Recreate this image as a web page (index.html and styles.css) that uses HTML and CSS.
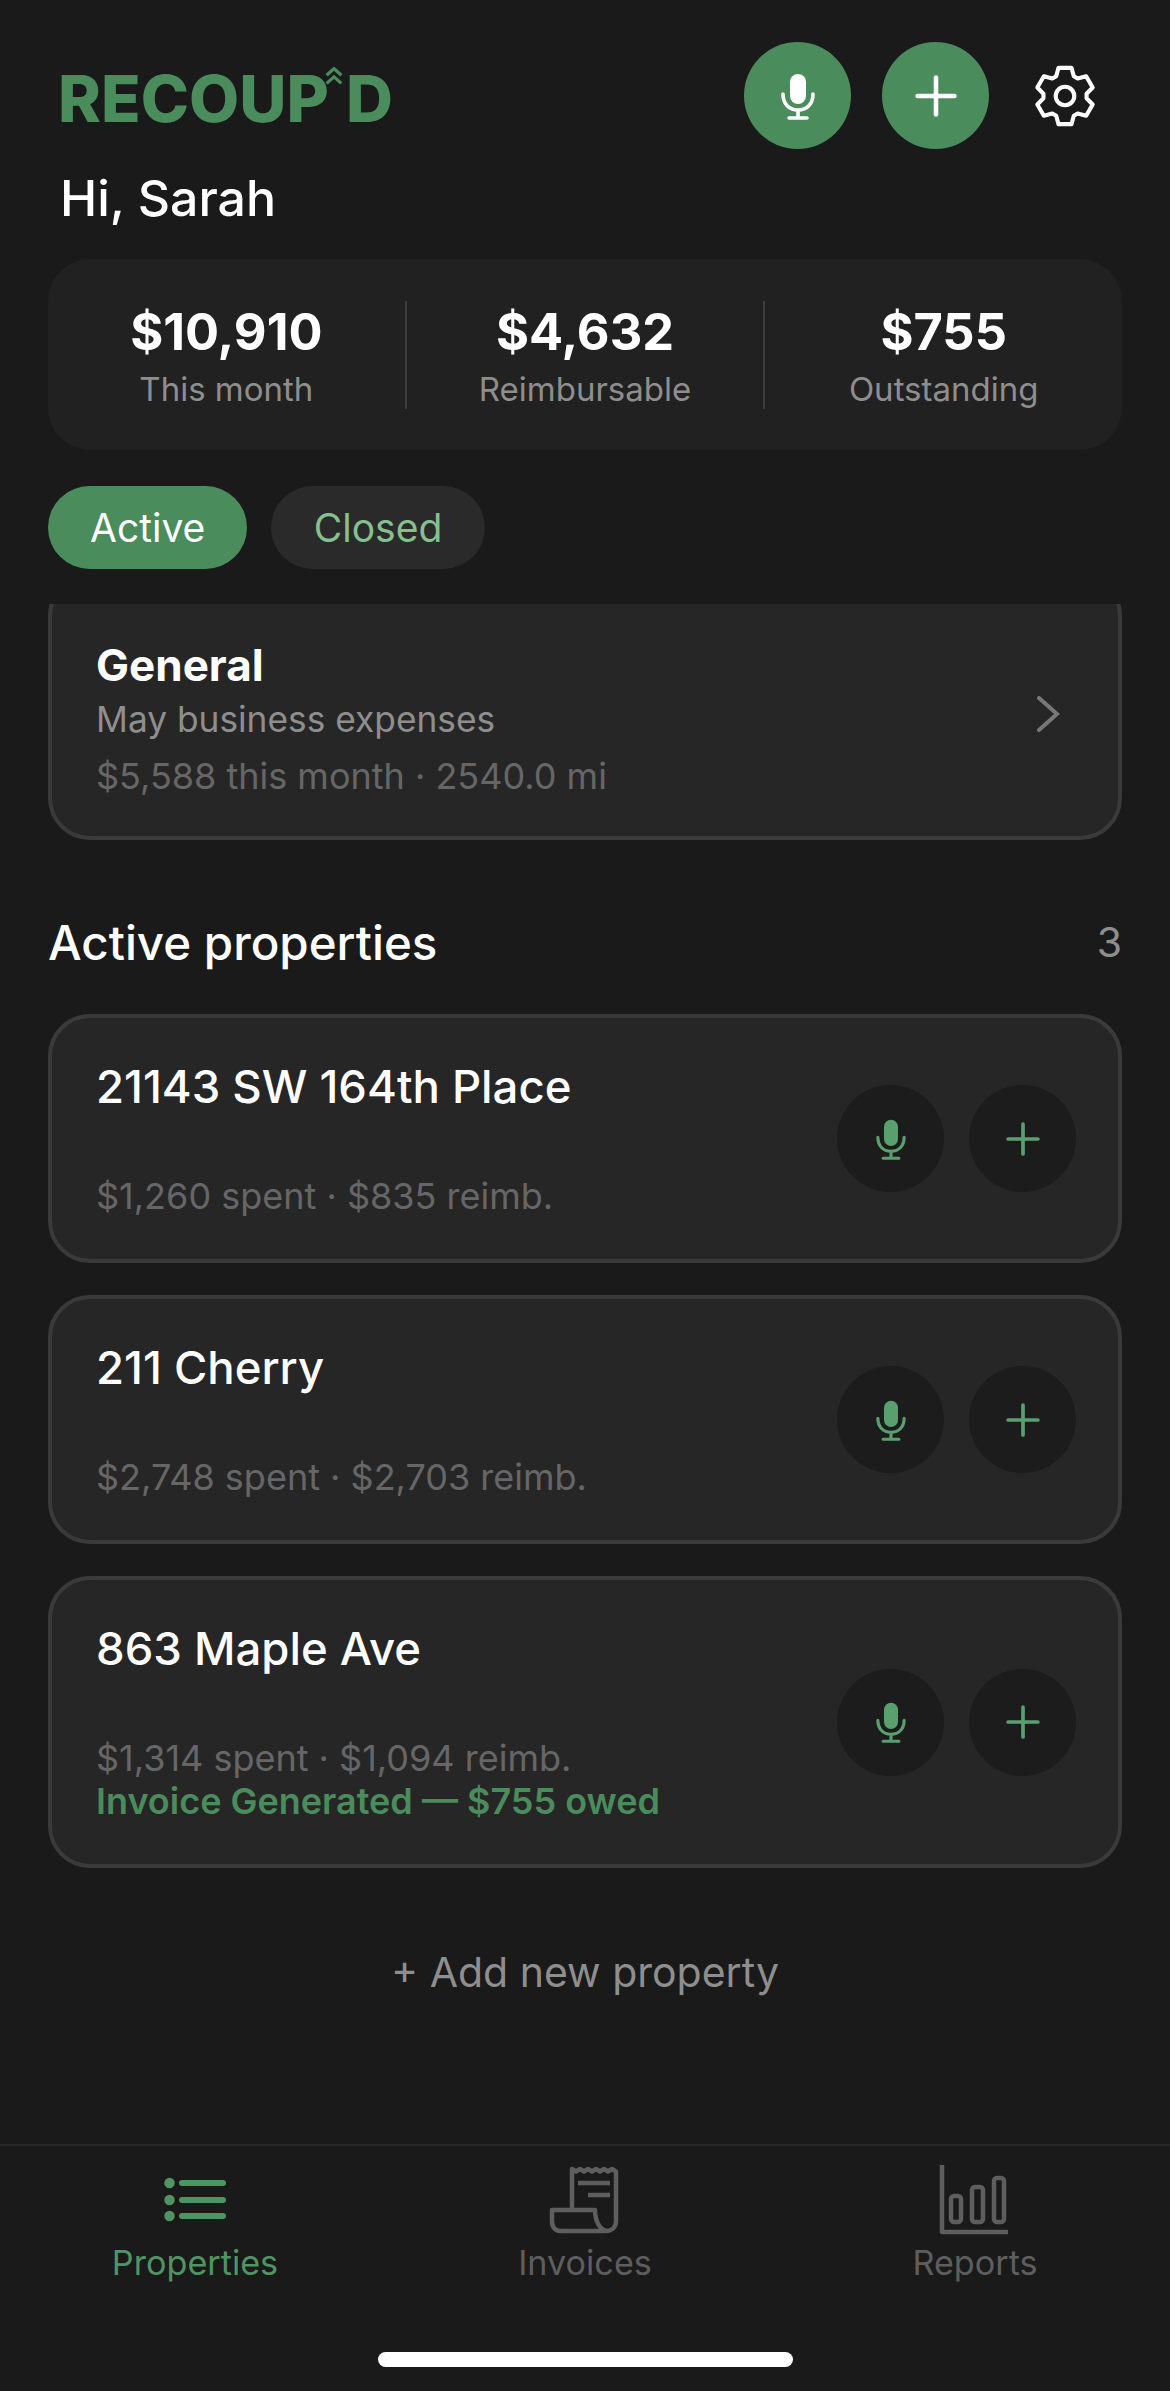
FILE: index.html
```html
<!DOCTYPE html>
<html lang="en">
    <head>
        <meta charset="UTF-8">
        <meta name="viewport" content="width=device-width, initial-scale=1.0">
        <title>Recoup'd</title>
        <link rel="stylesheet" href="styles.css">
    </head>

    <body>
        <div class="app">
            <header class="top">
                <div class="logo">RECOUP<svg class="logo-arrow" viewBox="0 0 24 22"><path d="M3 10 12 2l9 8M3 20l9-8 9 8"/></svg>D</div>
                <button class="round round-main"><svg class="icon-mic" viewBox="0 0 24 24"><use href="#mic"/></svg></button>
                <button class="round round-main"><svg class="icon-plus" viewBox="0 0 24 24"><use href="#plus"/></svg></button>
                <svg class="gear" viewBox="-31 -31 62 62"><path d="M-8.500-19.200-6.300-27.300H6.300L8.500-19.200 12.300-17 20.500-19.100 26.800-8.200 20.900-2.200V2.200L26.800 8.200 20.500 19.100 12.300 17 8.500 19.200 6.300 27.300H-6.300L-8.500 19.200-12.300 17-20.500 19.100-26.800 8.200-20.900 2.200V-2.200L-26.800-8.200-20.500-19.100-12.300-17Z"/><circle r="9"/></svg>
            </header>

            <h1 class="hello">Hi, Sarah</h1>

            <section class="stats">
                <div class="stat"><strong>$10,910</strong><span>This month</span></div>
                <div class="stat"><strong>$4,632</strong><span>Reimbursable</span></div>
                <div class="stat"><strong>$755</strong><span>Outstanding</span></div>
            </section>

            <div class="tabs">
                <div class="tab tab-on">Active</div>
                <div class="tab">Closed</div>
            </div>

            <main class="list">
                <div class="card general">
                    <div class="general-text">
                        <h2>General</h2>
                        <p class="sub">May business expenses</p>
                        <p class="meta">$5,588 this month · 2540.0 mi</p>
                    </div>
                    <svg class="chevron" viewBox="0 0 24 36"><path d="M3 2l18 16L3 34"/></svg>
                </div>

                <div class="section-head">
                    <h3>Active properties</h3>
                    <span>3</span>
                </div>

                <div class="card prop">
                    <div class="prop-text">
                        <h4>21143 SW 164th Place</h4>
                        <p class="meta">$1,260 spent · $835 reimb.</p>
                    </div>
                    <div class="prop-btns">
                        <button class="round round-dark"><svg class="icon-mic" viewBox="0 0 24 24"><use href="#mic"/></svg></button>
                        <button class="round round-dark"><svg class="icon-plus" viewBox="0 0 24 24"><use href="#plus"/></svg></button>
                    </div>
                </div>

                <div class="card prop">
                    <div class="prop-text">
                        <h4>211 Cherry</h4>
                        <p class="meta">$2,748 spent · $2,703 reimb.</p>
                    </div>
                    <div class="prop-btns">
                        <button class="round round-dark"><svg class="icon-mic" viewBox="0 0 24 24"><use href="#mic"/></svg></button>
                        <button class="round round-dark"><svg class="icon-plus" viewBox="0 0 24 24"><use href="#plus"/></svg></button>
                    </div>
                </div>

                <div class="card prop">
                    <div class="prop-text">
                        <h4>863 Maple Ave</h4>
                        <p class="meta">$1,314 spent · $1,094 reimb.</p>
                        <p class="owed">Invoice Generated — $755 owed</p>
                    </div>
                    <div class="prop-btns">
                        <button class="round round-dark"><svg class="icon-mic" viewBox="0 0 24 24"><use href="#mic"/></svg></button>
                        <button class="round round-dark"><svg class="icon-plus" viewBox="0 0 24 24"><use href="#plus"/></svg></button>
                    </div>
                </div>

                <div class="add">+ Add new property</div>
            </main>

            <nav class="nav">
                <div class="nav-item nav-on">
                    <svg viewBox="0 0 72 72"><path class="fat" d="M23 19h41M23 36h41M23 52h41"/><path class="dot" d="M10.500 19h.01M10.500 36h.01M10.500 52h.01"/></svg>
                    <span>Properties</span>
                </div>
                <div class="nav-item">
                    <svg viewBox="0 0 72 72"><path d="M23 46V5l4 2.500 4-2.500 4 2.500 4-2.500 4 2.500 4-2.500 4 2.500 4-2.500 4 2.500 4-2.500 4 2.500V57c0 6-4 10-10 10H12C6 67 3 63 3 57V46h43c0 11 5 21 13 21"/><path d="M29 19h32M39 31h22"/></svg>
                    <span>Invoices</span>
                </div>
                <div class="nav-item">
                    <svg viewBox="0 0 72 72"><path d="M3 1v67h66"/><rect x="12" y="32" width="10" height="26" rx="3"/><rect x="33" y="23" width="11" height="35" rx="3"/><rect x="55" y="14" width="10" height="44" rx="3"/></svg>
                    <span>Reports</span>
                </div>
            </nav>

            <div class="home-bar"></div>
        </div>

        <svg class="defs" aria-hidden="true">
            <symbol id="mic" viewBox="0 0 24 24">
                <rect class="mic-head" x="8" y="1" width="8" height="15" rx="4"/>
                <path class="mic-line" d="M4.500 11c0 5 3 8 7.500 8s7.500-3 7.500-8M12 19v3.500M7.500 23h9"/>
            </symbol>
            <symbol id="plus" viewBox="0 0 24 24">
                <path class="plus-line" d="M12 3.500v17M3.500 12h17"/>
            </symbol>
        </svg>
    </body>
</html>
```

FILE: styles.css
```css
*{
    box-sizing: border-box;
}

body{
    margin: 0;
    background: #1a1a1a;
    color: white;
    font-family: Inter, "Liberation Sans", sans-serif;
}

h1, h2, h3, h4, p{
    margin: 0;
}

button{
    border: none;
    padding: 0;
}

.defs{
    display: none;
}

.app{
    height: 2391px;
    display: flex;
    flex-direction: column;
    overflow: hidden;
}

.top{
    display: flex;
    align-items: center;
    gap: 31px;
    height: 107px;
    margin-top: 42px;
    padding: 0 73px 0 58px;
}

.logo{
    flex: 1;
    display: flex;
    align-items: flex-start;
    padding-top: 6px;
    font-size: 65px;
    font-weight: 800;
    line-height: 64px;
    color: #4a8c5c;
}

.logo-arrow{
    width: 20px;
    height: 18px;
    margin: 0 2px 0 -5px;
    fill: none;
    stroke: #4a8c5c;
    stroke-width: 4;
}

.round{
    flex: none;
    width: 107px;
    height: 107px;
    border-radius: 50%;
    display: flex;
    align-items: center;
    justify-content: center;
}

.round-main{
    background: #4a8c5c;
    color: white;
}

.round-main .icon-mic{
    width: 48px;
    height: 48px;
}

.round-main .icon-plus{
    width: 52px;
    height: 52px;
}

.round-dark{
    background: #1c1c1c;
    color: #5aa06e;
}

.round-dark svg{
    width: 42px;
    height: 42px;
}

.mic-head{
    fill: currentColor;
}

.mic-line, .plus-line{
    fill: none;
    stroke: currentColor;
    stroke-width: 1.800;
    stroke-linecap: round;
}

.plus-line{
    stroke-width: 2.100;
}

.gear{
    flex: none;
    width: 64px;
    height: 64px;
    margin-left: 13px;
    fill: none;
    stroke: white;
    stroke-width: 4;
    stroke-linejoin: round;
}

.hello{
    margin: 18px 0 0 60px;
    font-size: 50px;
    line-height: 62px;
    font-weight: 500;
}

.stats{
    display: flex;
    align-items: center;
    height: 191px;
    margin: 30px 48px 0;
    border-radius: 42px;
    background: #212121;
}

.stat{
    flex: 1;
    height: 108px;
    display: flex;
    flex-direction: column;
    align-items: center;
    border-left: 2px solid #3c3c3c;
}

.stat:first-child{
    border-left: none;
}

.stat strong{
    font-size: 50.500px;
    line-height: 62px;
    font-weight: 700;
}

.stat span{
    margin-top: 6px;
    font-size: 33px;
    line-height: 40px;
    color: #8e8e8e;
}

.tabs{
    display: flex;
    gap: 24px;
    margin: 36px 48px 0;
}

.tab{
    height: 83px;
    padding: 0 42.500px;
    border-radius: 42px;
    background: #2a2a2a;
    color: #86c08f;
    font-size: 39px;
    line-height: 83px;
}

.tab-on{
    padding: 0 42px;
    background: #4a8c5c;
    color: white;
}

.list{
    flex: 1;
    margin-top: 35px;
    padding: 0 48px;
    overflow: hidden;
}

.card{
    display: flex;
    align-items: center;
    background: #262626;
    border: 4px solid #3a3a3a;
    border-radius: 42px;
}

.general{
    height: 266px;
    margin-top: -30px;
    padding: 0 60px 0 44px;
}

.general-text{
    flex: 1;
    padding-top: 24px;
}

.general h2{
    font-size: 44px;
    line-height: 60px;
    font-weight: 700;
}

.sub{
    margin-top: -2px;
    font-size: 35.300px;
    line-height: 54px;
    color: #8e8e8e;
}

.general .meta{
    margin-top: 2px;
}

.meta{
    font-size: 36px;
    line-height: 54px;
    color: #666666;
}

.chevron{
    width: 24px;
    height: 36px;
    margin: 14px -2px 0 0;
    fill: none;
    stroke: #777777;
    stroke-width: 4;
    stroke-linecap: round;
}

.section-head{
    display: flex;
    justify-content: space-between;
    align-items: center;
    margin: 69px 0 39px;
    height: 66px;
}

.section-head h3{
    font-size: 47.500px;
    font-weight: 500;
}

.section-head span{
    font-size: 41px;
    color: #8e8e8e;
}

.prop{
    min-height: 249px;
    margin-bottom: 32px;
    padding: 0 42px 0 44px;
}

.prop-text{
    flex: 1;
    align-self: flex-start;
    padding-top: 37px;
}

.prop h4{
    margin-bottom: 50px;
    font-size: 45.500px;
    line-height: 64px;
    font-weight: 500;
}

.owed{
    margin-bottom: 47px;
    font-size: 36px;
    line-height: 32px;
    font-weight: 600;
    color: #4a8c5c;
}

.prop-btns{
    display: flex;
    gap: 25px;
}

.add{
    margin-top: 74px;
    text-align: center;
    font-size: 41px;
    line-height: 60px;
    color: #8e8e8e;
}

.nav{
    display: flex;
    height: 169px;
    border-top: 2px solid #262626;
    padding-top: 18px;
}

.nav-item{
    flex: 1;
    display: flex;
    flex-direction: column;
    align-items: center;
    color: #5e5e5e;
    font-size: 34.200px;
    line-height: 44px;
}

.nav-item svg{
    width: 72px;
    height: 72px;
    margin-bottom: 5px;
    fill: none;
    stroke: currentColor;
    stroke-width: 4.500;
    stroke-linejoin: round;
}

.nav-on{
    color: #4f9563;
}

.fat{
    stroke-width: 6;
    stroke-linecap: round;
}

.dot{
    stroke-width: 10.500;
    stroke-linecap: round;
}

.home-bar{
    width: 415px;
    height: 15px;
    margin: 39px auto 24px;
    border-radius: 8px;
    background: white;
}
```
